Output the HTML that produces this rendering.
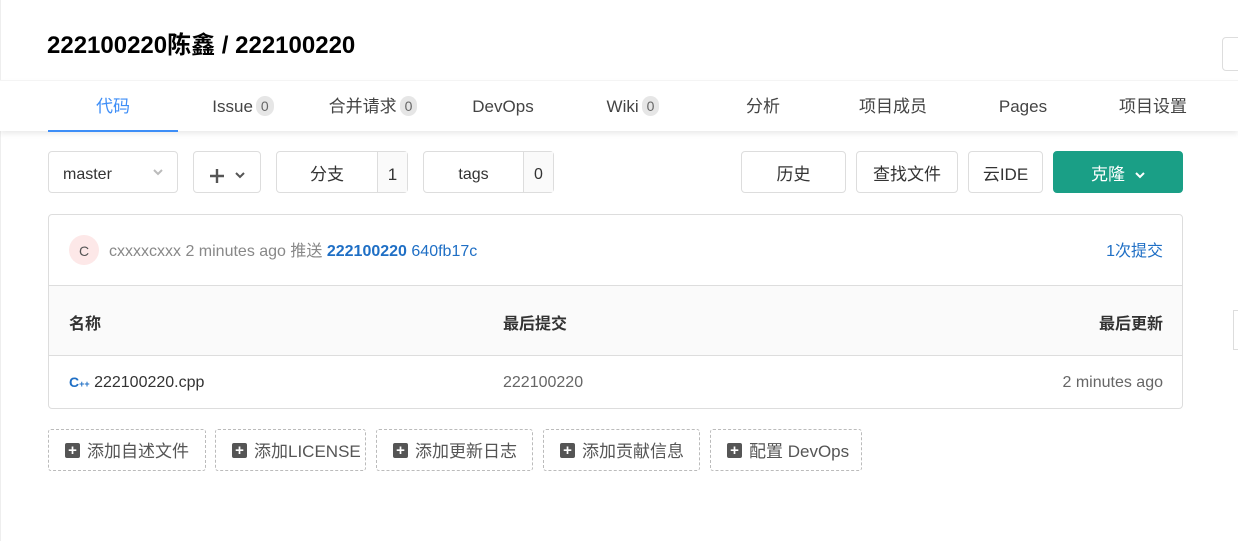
<!DOCTYPE html>
<html><head><meta charset="utf-8"><style>
*{box-sizing:border-box;margin:0;padding:0}
body{width:1238px;height:541px;background:#fff;font-family:"Liberation Sans","Noto Sans CJK SC",sans-serif;color:#333;position:relative;overflow:hidden}
.a{position:absolute}
.title{left:47px;top:25px;font-size:24px;font-weight:bold;color:#000}
.nav{left:0;top:80px;width:1238px;height:51px;background:#fff;box-shadow:0 3px 5px rgba(0,0,0,.08);border-top:1px solid #f4f4f4}
.tab{position:absolute;top:0;width:130px;height:51px;line-height:52px;text-align:center;font-size:17px;color:#444}
.tab.on{color:#3e8ef7;border-bottom:2px solid #3e8ef7}
.badge{display:inline-block;background:#e6e6e6;color:#666;border-radius:10px;font-size:14px;line-height:20px;padding:0 5px;margin-left:3px;vertical-align:1px}
.btn{position:absolute;top:151px;height:42px;border:1px solid #ddd;border-radius:4px;background:#fff;font-size:17px;line-height:45px;text-align:center;color:#333}
.cnt{position:absolute;right:0;top:0;height:40px;border-left:1px solid #ddd;width:30px;background:#fafafa}
.box{left:48px;top:214px;width:1135px;height:195px;border:1px solid #ddd;border-radius:4px;overflow:hidden}
.add{position:absolute;top:429px;height:42px;border:1px dashed #bbb;border-radius:3px;font-size:17px;line-height:43px;color:#555;padding-left:38px}
.add:before{content:"";position:absolute;left:16px;top:13px;width:15px;height:15px;background:#555;border-radius:2px}
.add:after{content:"+";position:absolute;left:16px;top:13px;width:15px;height:15px;color:#fff;font-size:15px;line-height:15px;text-align:center;font-weight:bold}
svg.ch{display:inline-block;vertical-align:middle}
</style></head><body>
<div class="a" style="left:0;top:0;width:1px;height:541px;background:#eee"></div>
<div class="a title">222100220陈鑫 / 222100220</div>
<div class="a" style="left:1222px;top:37px;width:30px;height:34px;border:1px solid #ddd;border-radius:4px"></div>
<div class="a nav">
<div class="tab on" style="left:48px">代码</div>
<div class="tab" style="left:178px">Issue<span class="badge">0</span></div>
<div class="tab" style="left:308px">合并请求<span class="badge">0</span></div>
<div class="tab" style="left:438px">DevOps</div>
<div class="tab" style="left:568px">Wiki<span class="badge">0</span></div>
<div class="tab" style="left:698px">分析</div>
<div class="tab" style="left:828px">项目成员</div>
<div class="tab" style="left:958px">Pages</div>
<div class="tab" style="left:1088px">项目设置</div>
</div>
<div class="btn" style="left:48px;width:130px;text-align:left;padding-left:14px;font-size:16px">master<svg class="ch" style="position:absolute;right:14px;top:17px" width="10" height="7"><path d="M1 1l4 4 4-4" stroke="#bbb" stroke-width="2" fill="none"/></svg></div>
<div class="btn" style="left:193px;width:68px;color:#555"><svg class="ch" width="16" height="16"><path d="M8 1v14M1 8h14" stroke="#555" stroke-width="2.4"/></svg><svg class="ch" style="margin-left:10px" width="10" height="7"><path d="M1 1l4 4 4-4" stroke="#555" stroke-width="2" fill="none"/></svg></div>
<div class="btn" style="left:276px;width:132px;padding-right:30px">分支<div class="cnt">1</div></div>
<div class="btn" style="left:423px;width:131px;padding-right:30px;font-size:16px">tags<div class="cnt">0</div></div>
<div class="btn" style="left:741px;width:105px">历史</div>
<div class="btn" style="left:856px;width:102px">查找文件</div>
<div class="btn" style="left:968px;width:75px">云IDE</div>
<div class="btn" style="left:1053px;width:130px;background:#1a9f86;border-color:#1a9f86;color:#fff">克隆<svg class="ch" style="margin-left:10px" width="10" height="7"><path d="M1 1l4 4 4-4" stroke="#fff" stroke-width="2" fill="none"/></svg></div>
<div class="a box">
 <div class="a" style="left:20px;top:20px;width:30px;height:30px;border-radius:50%;background:#fde8e8;color:#555;font-size:14px;text-align:center;line-height:32px">C</div>
 <div class="a" style="left:60px;top:22px;font-size:16px;color:#888">cxxxxcxxx 2 minutes ago 推送 <b style="color:#1f6fc5">222100220</b> <span style="color:#1f6fc5">640fb17c</span></div>
 <div class="a" style="right:19px;top:22px;font-size:16px;color:#1f6fc5">1次提交</div>
 <div class="a" style="left:0;top:70px;width:100%;height:71px;background:#fafafa;border-top:1px solid #ddd;border-bottom:1px solid #ddd;font-weight:bold;font-size:16px;color:#333">
  <span class="a" style="left:20px;top:24px">名称</span><span class="a" style="left:454px;top:24px">最后提交</span><span class="a" style="right:19px;top:24px">最后更新</span></div>
 <div class="a" style="left:20px;top:159px;font-size:16px;color:#333"><b style="color:#1f6fc5;font-size:14px">C<span style="font-size:9px">++</span></b> 222100220.cpp</div>
 <div class="a" style="left:454px;top:159px;font-size:16px;color:#666">222100220</div>
 <div class="a" style="right:19px;top:159px;font-size:16px;color:#666">2 minutes ago</div>
</div>
<div class="add" style="left:48px;width:158px">添加自述文件</div>
<div class="add" style="left:215px;width:151px">添加LICENSE</div>
<div class="add" style="left:376px;width:157px">添加更新日志</div>
<div class="add" style="left:543px;width:157px">添加贡献信息</div>
<div class="add" style="left:710px;width:152px">配置 DevOps</div>
<div class="a" style="left:1233px;top:310px;width:10px;height:40px;border:1px solid #ddd"></div>
</body></html>
